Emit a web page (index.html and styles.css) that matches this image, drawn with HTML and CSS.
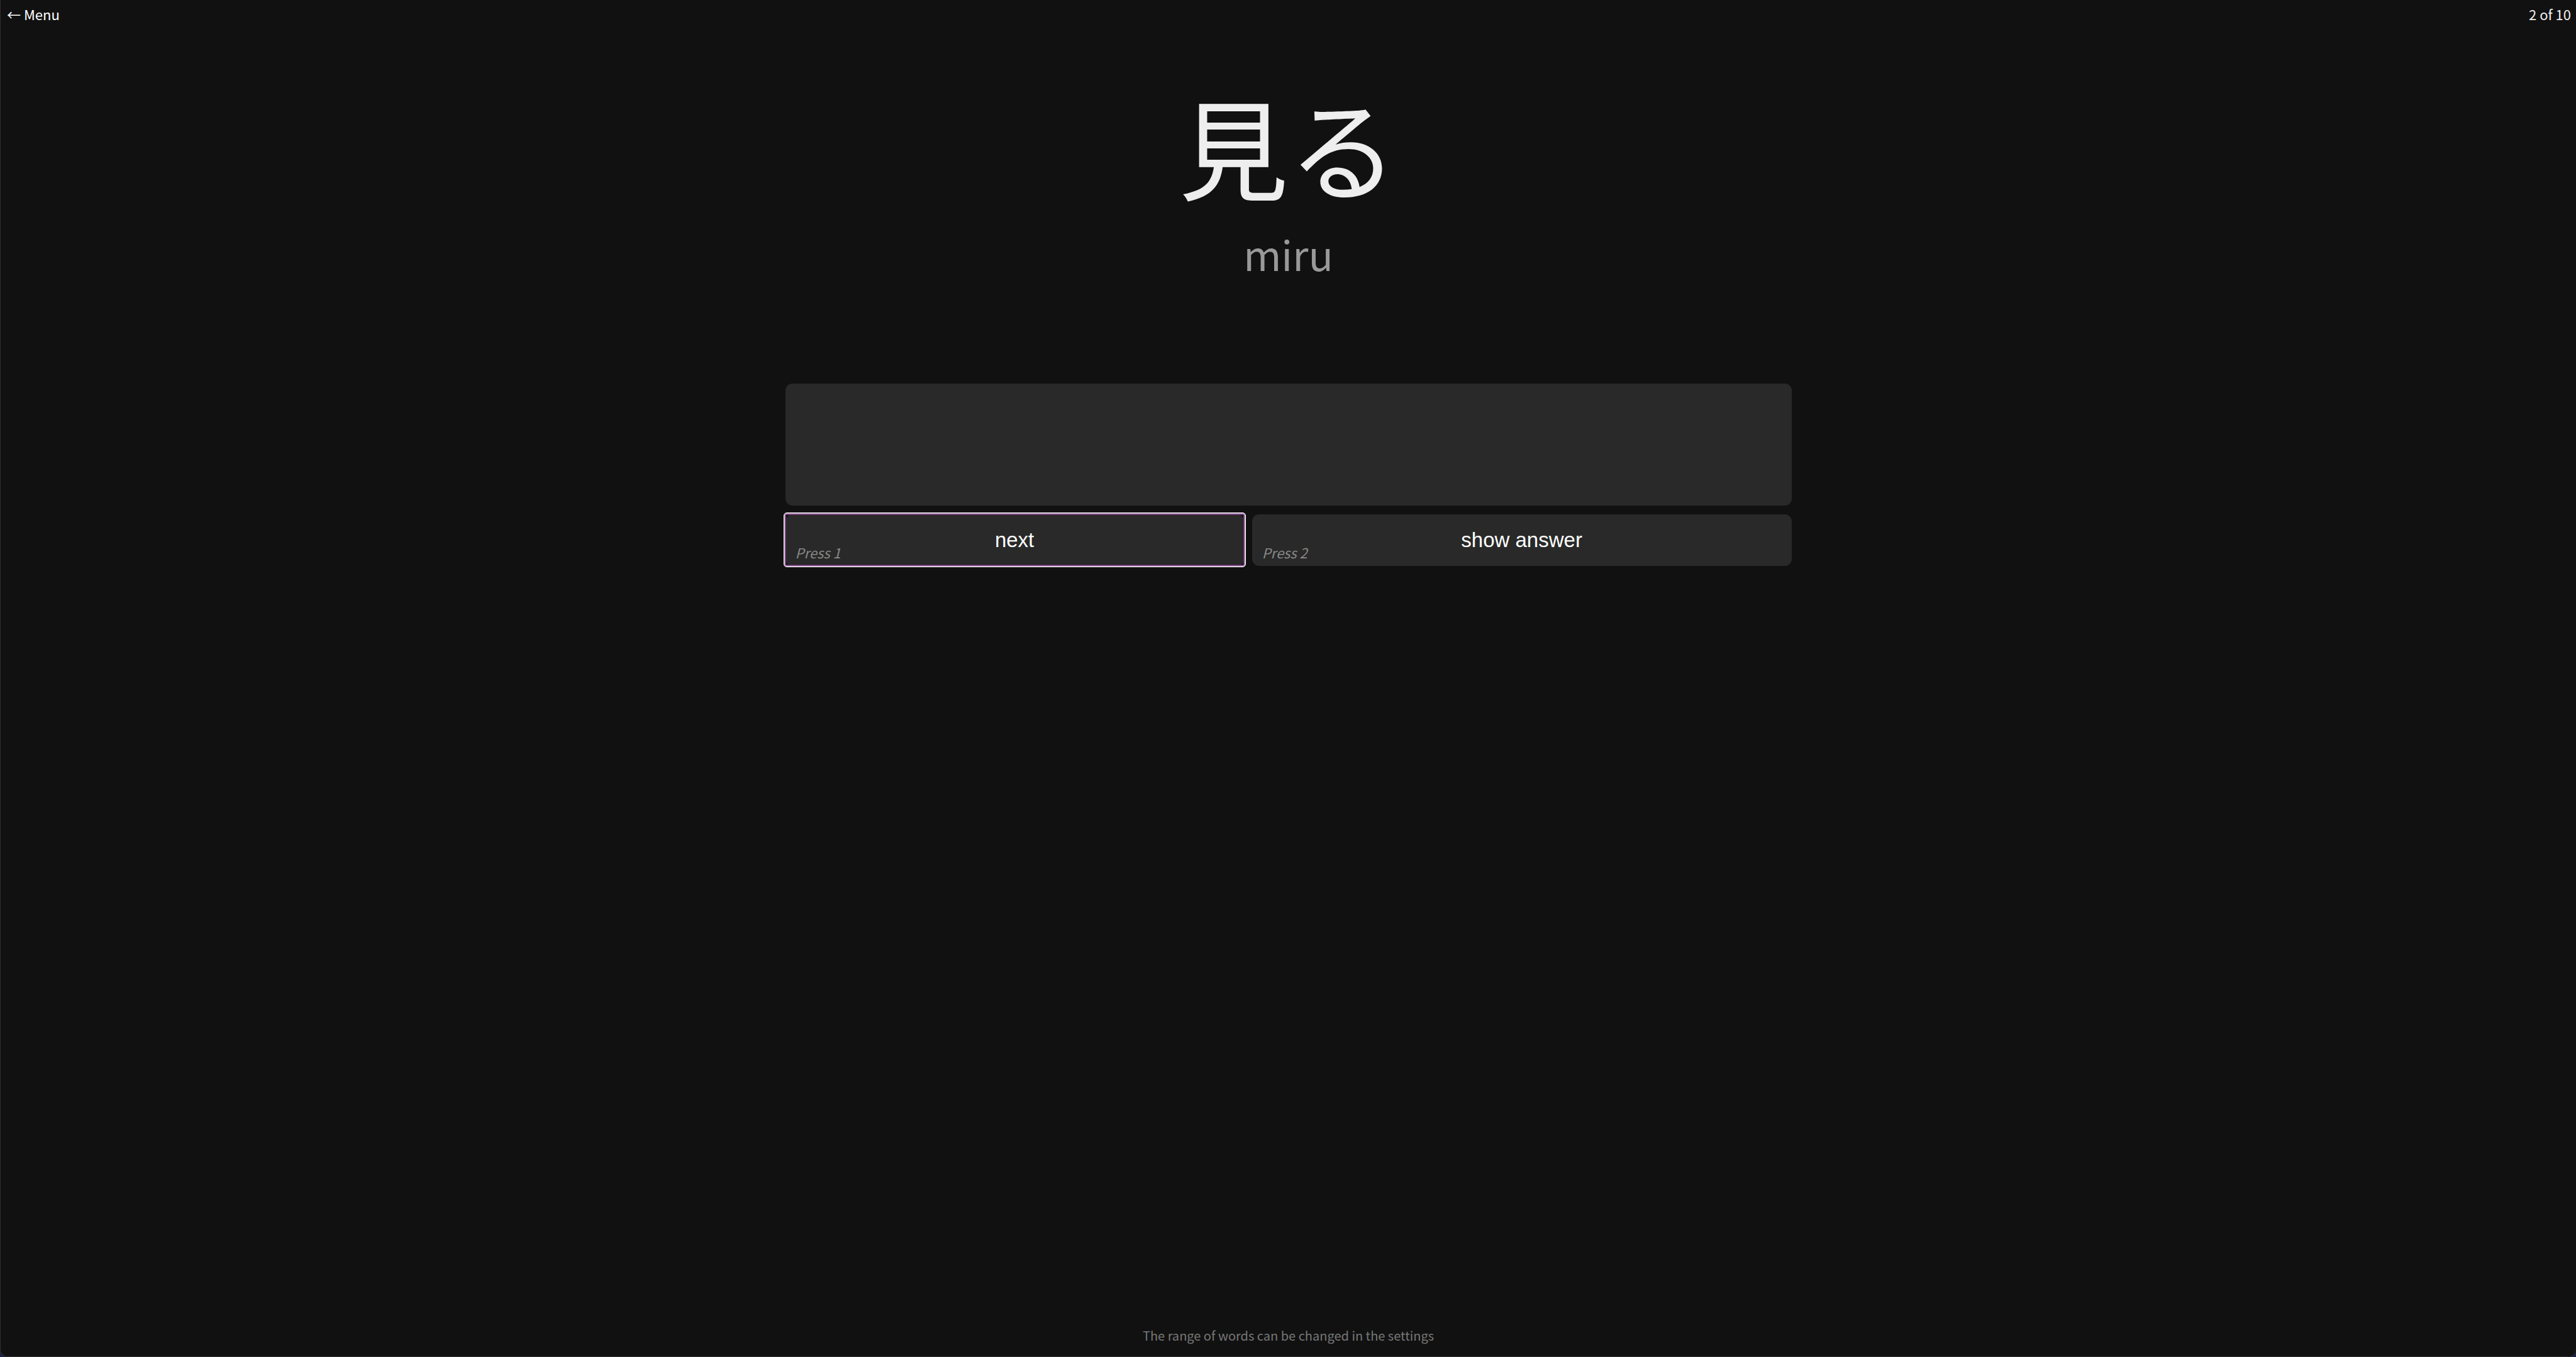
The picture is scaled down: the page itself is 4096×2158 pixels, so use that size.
FILE: index.html
```html
<!DOCTYPE html>
<html lang="ja">
<head>
<meta charset="utf-8">
<title>Vocabulary quiz</title>
<link rel="stylesheet" href="styles.css">
</head>
<body>
<div class="app">
  <header class="topbar">
    <a class="menu-link" href="#menu">← Menu</a>
    <span class="progress">2 of 10</span>
  </header>
  <main class="quiz">
    <h1 class="word">見る</h1>
    <p class="reading">miru</p>
    <div class="answer" aria-live="polite"></div>
    <div class="actions">
      <button class="action action-focused" type="button">next<span class="hint">Press 1</span></button>
      <button class="action" type="button">show answer<span class="hint">Press 2</span></button>
    </div>
  </main>
  <footer class="note">The range of words can be changed in the settings</footer>
</div>
</body>
</html>
```
FILE: styles.css
```css
* {
  box-sizing: border-box;
}

html {
  background: #18233d;
}

body {
  margin: 0;
  font-family: "Noto Sans CJK JP", sans-serif;
  font-size: 22px;
  line-height: 32px;
  color: #eee;
}

.app {
  display: flex;
  flex-direction: column;
  min-height: 100vh;
  background: #111;
  border: solid #303030;
  border-width: 0 0 1px 1px;
  border-radius: 0 0 12px 12px;
}

.topbar {
  display: flex;
  justify-content: space-between;
  padding: 6px 8px 0 10px;
}

.menu-link {
  color: #fff;
  text-decoration: none;
}

.quiz {
  display: flex;
  flex: 1;
  flex-direction: column;
  align-items: center;
}

.word {
  margin: 66px 0 0;
  font-size: 174px;
  font-weight: 400;
  line-height: 252px;
}

.reading {
  margin: 0;
  font-size: 65px;
  line-height: 94px;
  color: #999;
}

.answer {
  width: 100%;
  max-width: 1600px;
  min-height: 194px;
  margin-top: 160px;
  background: #292929;
  border-radius: 11px;
}

.actions {
  display: grid;
  grid-template-columns: 17fr 20fr;
  gap: 13px;
  width: 100%;
  max-width: 1600px;
  margin-top: 14px;
}

.action {
  position: relative;
  height: 82px;
  padding: 0;
  border: 0;
  border-radius: 11px;
  background: #292929;
  color: #fff;
  font-family: "Liberation Sans", Arial, sans-serif;
  font-size: 33px;
  line-height: 38px;
}

/* focus ring: white edge fading through lilac to purple */
.action-focused::after {
  content: "";
  position: absolute;
  inset: -3px -3px -2px;
  border: 1px solid #fff;
  border-radius: 5px;
  box-shadow: inset 0 0 0 1px #c7a4cb, inset 0 0 0 2px #935e99, inset 0 0 0 3px #5c2c62;
}

.hint {
  position: absolute;
  left: 16px;
  bottom: 6px;
  font-family: "Noto Sans CJK JP", sans-serif;
  font-size: 22px;
  font-style: italic;
  line-height: 32px;
  color: #888;
}

.note {
  padding-bottom: 18px;
  font-size: 20px;
  line-height: 30px;
  text-align: center;
  color: #777;
}
```
